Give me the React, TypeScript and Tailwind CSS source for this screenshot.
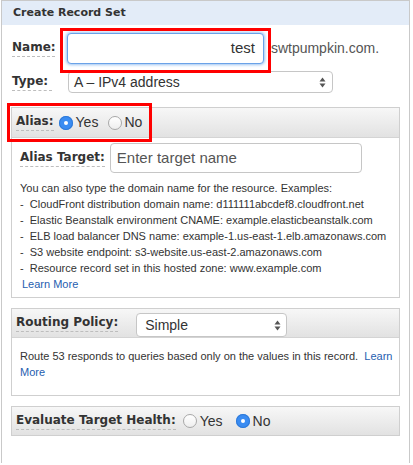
import React from "react";

const labelFont = { fontFamily: '"DejaVu Sans", Verdana, sans-serif' };

const Radio = ({ checked }: { checked?: boolean }) =>
  checked ? (
    <span className="inline-flex h-[14px] w-[14px] items-center justify-center rounded-full bg-[#3a8cf2] shadow-[inset_0_0_0_1px_#2f7ad8]">
      <span className="h-[4px] w-[4px] rounded-full bg-white" />
    </span>
  ) : (
    <span className="inline-block h-[14px] w-[14px] rounded-full border border-[#a8a8a8] bg-gradient-to-b from-white to-[#eee]" />
  );

const Arrows = () => (
  <svg width="7" height="11" viewBox="0 0 7 11" className="ml-auto">
    <path d="M3.5 0.5 L6.5 4.5 L0.5 4.5 Z" fill="#555" />
    <path d="M3.5 10.5 L6.5 6.5 L0.5 6.5 Z" fill="#555" />
  </svg>
);

const Label = ({ children, className = "" }: { children: React.ReactNode; className?: string }) => (
  <span
    style={labelFont}
    className={`text-[12px] font-bold leading-[15px] text-[#333] border-b border-dashed border-[#bdbdbd] pb-[1px] ${className}`}
  >
    {children}
  </span>
);

export default function App() {
  return (
    <div className="h-[465px] w-[413px] bg-white" style={{ fontFamily: '"Liberation Sans", Arial, sans-serif' }}>
      <div className="ml-[1px] h-[463px] w-[409px] border-x border-t border-[#c9c9c9]">
        <div className="flex h-[24px] items-center bg-[#e3ecf8] pl-[11px]">
          <span style={labelFont} className="text-[11px] font-bold text-[#333]">
            Create Record Set
          </span>
        </div>

        {/* Name */}
        <div className="mt-[7px] flex h-[32px] items-center pl-[10px]">
          <Label className="w-[43px]">Name:</Label>
          <div className="relative ml-[12px]">
            <div className="pointer-events-none absolute -left-[7px] -top-[5px] h-[45px] w-[211px] border-[3px] border-[#f00]" />
            <div className="flex h-[31px] w-[197px] items-center justify-end rounded-[4px] border border-[#6aa2e8] bg-white pr-[8px] text-[15px] text-[#333] shadow-[0_0_3px_1px_#9cc3f2]">
              test
            </div>
          </div>
          <span className="ml-[3px] text-[14px] text-[#555]">.swtpumpkin.com.</span>
        </div>

        {/* Type */}
        <div className="mt-[7px] flex h-[22px] items-center pl-[10px]">
          <Label className="w-[40px]">Type:</Label>
          <div className="ml-[16px] flex h-[22px] w-[265px] items-center rounded-[4px] border border-[#c6c6c6] bg-white pl-[5px] pr-[6px] text-[14px] text-[#333]">
            A – IPv4 address
            <Arrows />
          </div>
        </div>

        {/* Alias panel */}
        <div className="ml-[9px] mt-[14px] w-[389px] border border-[#cfcfcf]">
          <div className="relative flex h-[30px] items-center border-b border-[#d4d4d4] bg-gradient-to-b from-[#f7f7f7] to-[#e2e2e2] pl-[4px]">
            <div className="pointer-events-none absolute -left-[5px] -top-[5px] h-[39px] w-[145px] border-[3px] border-[#f00]" />
            <Label>Alias:</Label>
            <span className="ml-[5px] flex items-center gap-[3px] text-[14px] text-[#333]">
              <Radio checked />
              Yes
            </span>
            <span className="ml-[10px] flex items-center gap-[2px] text-[14px] text-[#333]">
              <Radio />
              No
            </span>
          </div>
          <div className="px-[8px] pb-[5px] pt-[5px]">
            <div className="flex items-center">
              <Label>Alias Target:</Label>
              <div className="ml-[5px] flex h-[30px] w-[252px] items-center rounded-[4px] border border-[#c6c6c6] pl-[6px] text-[15px] text-[#555]">
                Enter target name
              </div>
            </div>
            <div className="mt-[7px] text-[11px] leading-[16px] text-[#333]">
              <div>You can also type the domain name for the resource. Examples:</div>
              <div>-&nbsp; CloudFront distribution domain name: d111111abcdef8.cloudfront.net</div>
              <div>-&nbsp; Elastic Beanstalk environment CNAME: example.elasticbeanstalk.com</div>
              <div>-&nbsp; ELB load balancer DNS name: example-1.us-east-1.elb.amazonaws.com</div>
              <div>-&nbsp; S3 website endpoint: s3-website.us-east-2.amazonaws.com</div>
              <div>-&nbsp; Resource record set in this hosted zone: www.example.com</div>
              <div className="pl-[2px] text-[#1f5eb0]">Learn More</div>
            </div>
          </div>
        </div>

        {/* Routing policy */}
        <div className="ml-[9px] mt-[10px] w-[389px] border border-[#cfcfcf]">
          <div className="flex h-[29px] items-center border-b border-[#d4d4d4] bg-gradient-to-b from-[#f7f7f7] to-[#e2e2e2] pl-[4px]">
            <Label>Routing Policy:</Label>
            <div className="ml-[18px] mt-[4px] flex h-[24px] w-[151px] items-center rounded-[4px] border border-[#c6c6c6] bg-white pl-[8px] pr-[5px] text-[14px] text-[#333]">
              Simple
              <Arrows />
            </div>
          </div>
          <div className="h-[57px] pl-[8px] pt-[10px] text-[11px] leading-[16px] text-[#333]">
            <div className="whitespace-nowrap">
              Route 53 responds to queries based only on the values in this record.&nbsp;{" "}
              <span className="text-[#1f5eb0]">Learn</span>
            </div>
            <div className="text-[#1f5eb0]">More</div>
          </div>
        </div>

        {/* Evaluate target health */}
        <div className="ml-[9px] mt-[10px] flex h-[30px] w-[389px] items-center border border-[#cfcfcf] bg-gradient-to-b from-[#f7f7f7] to-[#e2e2e2] pl-[4px]">
          <Label>Evaluate Target Health:</Label>
          <span className="ml-[7px] flex items-center gap-[3px] text-[14px] text-[#333]">
            <Radio />
            Yes
          </span>
          <span className="ml-[13px] flex items-center gap-[3px] text-[14px] text-[#333]">
            <Radio checked />
            No
          </span>
        </div>
      </div>
    </div>
  );
}
